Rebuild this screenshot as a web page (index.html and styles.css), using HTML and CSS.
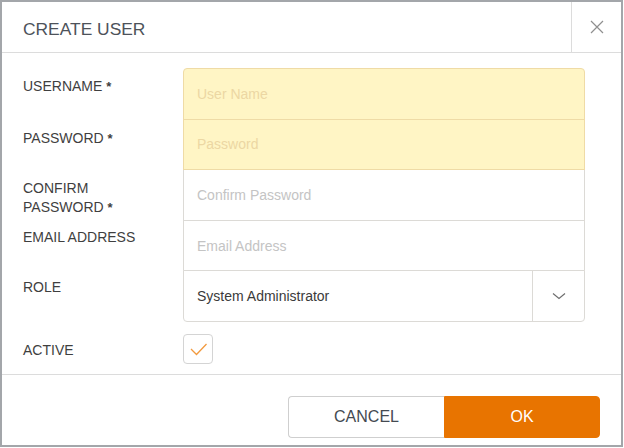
FILE: index.html
```html
<!DOCTYPE html>
<html lang="en">
<head>
<meta charset="utf-8">
<title>Create User</title>
<link rel="stylesheet" href="styles.css">
</head>
<body>
<div class="dialog">
  <header class="dialog-header">
    <h1 class="dialog-title">CREATE USER</h1>
    <button class="close-btn" type="button" aria-label="Close">
      <svg width="14" height="14" viewBox="0 0 14 14"><path d="M1 1 L13 13 M13 1 L1 13" stroke="#8f8f8f" stroke-width="1.2" fill="none"/></svg>
    </button>
  </header>

  <form class="dialog-body">
    <div class="grid">
      <label class="label">USERNAME <span class="req">*</span></label>
      <div class="field field-required field-first"><input type="text" placeholder="User Name"></div>

      <label class="label">PASSWORD <span class="req">*</span></label>
      <div class="field field-required"><input type="password" placeholder="Password"></div>

      <label class="label">CONFIRM<br>PASSWORD <span class="req">*</span></label>
      <div class="field"><input type="password" placeholder="Confirm Password"></div>

      <label class="label label-tight">EMAIL ADDRESS</label>
      <div class="field"><input type="text" placeholder="Email Address"></div>

      <label class="label label-tight">ROLE</label>
      <div class="field field-last field-select">
        <span class="select-value">System Administrator</span>
        <span class="select-toggle">
          <svg width="14" height="8" viewBox="0 0 14 8"><path d="M1 1.5 L7 6.5 L13 1.5" stroke="#6e6e6e" stroke-width="1.2" fill="none"/></svg>
        </span>
      </div>
    </div>

    <div class="active-row">
      <span class="label-inline">ACTIVE</span>
      <span class="checkbox">
        <svg width="30" height="30" viewBox="0 0 30 30"><path d="M8 15 L13.5 20.5 L23.5 10" stroke="#f29a3f" stroke-width="1.3" fill="none"/></svg>
      </span>
    </div>
  </form>

  <footer class="dialog-footer">
    <button type="button" class="btn btn-cancel">CANCEL</button>
    <button type="button" class="btn btn-ok">OK</button>
  </footer>
</div>
</body>
</html>
```

FILE: styles.css
```css
* { box-sizing: border-box; }

html, body {
  margin: 0;
  padding: 0;
  background: #ffffff;
  font-family: "Liberation Sans", Arial, sans-serif;
}

.dialog {
  width: 623px;
  height: 447px;
  border: 2px solid #a3a6aa;
  background: #fff;
  display: flex;
  flex-direction: column;
}

/* header */
.dialog-header {
  display: flex;
  height: 51px;
  border-bottom: 1px solid #dcdcdc;
}

.dialog-title {
  flex: 1;
  margin: 0;
  padding: 3px 0 0 21px;
  font-size: 17.4px;
  font-weight: normal;
  color: #4d525a;
  line-height: 48px;
}

.close-btn {
  width: 50px;
  border: 0;
  border-left: 1px solid #dcdcdc;
  background: transparent;
  padding: 0;
  display: flex;
  align-items: center;
  justify-content: center;
}

/* form */
.dialog-body {
  margin: 0;
  padding: 15px 0 10px 21px;
}

.grid {
  display: grid;
  grid-template-columns: 160px 402px;
}

.label {
  font-size: 14px;
  line-height: 19px;
  color: #3f3f3f;
  padding-top: 9px;
}

.label-tight { padding-top: 7px; }

.req {
  font-weight: bold;
  font-size: 13px;
}

.field {
  height: 51.6px;
  border: 1px solid #dcdad6;
  background: #fff;
  margin-top: -1px;
  display: flex;
  align-items: center;
}

.field-first {
  margin-top: 0;
  border-radius: 4px 4px 0 0;
}

.field-last {
  height: 51.6px;
  border-radius: 0 0 4px 4px;
}

.field-required {
  background: #fff5c5;
  border-color: #efdba6;
  position: relative;
  z-index: 1;
}

.field input {
  width: 100%;
  height: 100%;
  border: 0;
  outline: 0;
  background: transparent;
  padding: 0 13px;
  font-family: "Liberation Sans", Arial, sans-serif;
  font-size: 14px;
  color: #333;
}

.field input::placeholder { color: #c4c4c4; }
.field-required input::placeholder { color: #ecd7a3; }

.field-select { padding-left: 13px; }

.select-value {
  flex: 1;
  font-size: 14px;
  color: #3a3a3a;
}

.select-toggle {
  width: 52px;
  align-self: stretch;
  border-left: 1px solid #dcdad6;
  display: flex;
  align-items: center;
  justify-content: center;
}

.active-row {
  display: grid;
  grid-template-columns: 160px 30px;
  align-items: center;
  margin-top: 12px;
}

.label-inline {
  font-size: 14px;
  color: #3f3f3f;
  padding-top: 2px;
}

.checkbox {
  width: 30px;
  height: 30px;
  border: 1px solid #d4d4d4;
  border-radius: 4px;
  display: block;
}

.checkbox svg {
  display: block;
  margin: -1px;
}

/* footer */
.dialog-footer {
  border-top: 1px solid #dcdcdc;
  padding: 21px 21px 0 0;
  display: flex;
  justify-content: flex-end;
}

.btn {
  width: 156px;
  height: 42px;
  font-family: "Liberation Sans", Arial, sans-serif;
  font-size: 16px;
  padding: 0;
  cursor: pointer;
}

.btn-cancel {
  background: #fff;
  color: #444a52;
  border: 1px solid #cfcfcf;
  border-right: 0;
  border-radius: 4px 0 0 4px;
}

.btn-ok {
  background: #e87400;
  color: #fff;
  border: 1px solid #e87400;
  border-radius: 0 4px 4px 0;
}
```
